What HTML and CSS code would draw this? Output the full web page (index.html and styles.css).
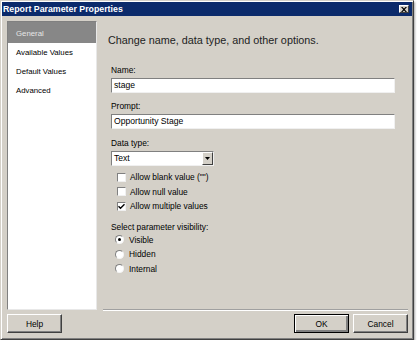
FILE: index.html
```html
<!DOCTYPE html>
<html lang="en">
<head>
    <meta charset="UTF-8">
    <title>Report Parameter Properties</title>
    <link rel="stylesheet" href="styles.css">
</head>
<body>

    <div class="dialog">

        <!-- Title bar -->
        <div class="titlebar">
            <span class="title">Report Parameter Properties</span>
            <span class="close">
                <svg width="6" height="5" viewBox="0 0 6 5"><path d="M0 0h1.5l1.5 1.6 1.5-1.6h1.5l-2.2 2.5 2.2 2.5h-1.5l-1.5-1.6-1.5 1.6h-1.5l2.2-2.5z" fill="#000"/></svg>
            </span>
        </div>

        <div class="content">

            <!-- Page list -->
            <ul class="nav">
                <li class="nav-item active">General</li>
                <li class="nav-item">Available Values</li>
                <li class="nav-item">Default Values</li>
                <li class="nav-item">Advanced</li>
            </ul>

            <!-- General page -->
            <div class="page">
                <h2 class="page-title">Change name, data type, and other options.</h2>
                <div class="form">
                    <div class="field">
                        <label>Name:</label>
                        <div class="textbox">stage</div>
                    </div>
                    <div class="field">
                        <label>Prompt:</label>
                        <div class="textbox">Opportunity Stage</div>
                    </div>
                    <div class="field field-type">
                        <label>Data type:</label>
                        <div class="select">
                            <span class="select-value">Text</span>
                            <span class="select-btn"><svg width="5" height="3" viewBox="0 0 5 3"><path d="M0 0h5l-2.5 3z" fill="#000"/></svg></span>
                        </div>
                    </div>

                    <div class="options">
                        <div class="option"><span class="checkbox"></span>Allow blank value ("")</div>
                        <div class="option"><span class="checkbox"></span>Allow null value</div>
                        <div class="option"><span class="checkbox checked"><svg width="7" height="7" viewBox="0 0 7 7"><path d="M0.5 3.2l2 2 4-4" fill="none" stroke="#000" stroke-width="1.4"/></svg></span>Allow multiple values</div>
                    </div>

                    <div class="group-label">Select parameter visibility:</div>
                    <div class="options radios">
                        <div class="option"><span class="radio checked"></span>Visible</div>
                        <div class="option"><span class="radio"></span>Hidden</div>
                        <div class="option"><span class="radio"></span>Internal</div>
                    </div>
                </div>
            </div>

        </div>

        <!-- Buttons -->
        <div class="footer">
            <button class="btn">Help</button>
            <span class="spacer"></span>
            <button class="btn default">OK</button>
            <button class="btn">Cancel</button>
        </div>

    </div>

</body>
</html>
```

FILE: styles.css
```css
body { margin: 0; background-color: #fff; font-family: "Liberation Sans", Arial, sans-serif; font-size: 8.4px; color: #000; }
.dialog { width: 414px; height: 340px; box-sizing: border-box; display: flex; flex-direction: column; background-color: #d4d0c8; border: 1px solid; border-color: #d4d0c8 #404040 #404040 #d4d0c8; box-shadow: inset 1px 1px #fff, inset -1px -1px #808080, 1px 2px 2px rgba(0,0,0,0.35); }

.titlebar { display: flex; align-items: center; justify-content: space-between; height: 14px; margin: 1px 1px 0 1px; padding: 0 3px 0 1px; background-color: #0b2a6b; color: #fff; }
.title { font-weight: bold; font-size: 8.8px; }
.close { display: flex; align-items: center; justify-content: center; width: 10px; height: 8px; box-sizing: border-box; background-color: #d4d0c8; border: 1px solid; border-color: #fff #404040 #404040 #fff; }

.content { display: flex; padding: 5px 5px 0 6px; }
.nav { list-style: none; margin: 0; padding: 0; width: 90px; height: 289px; box-sizing: border-box; background-color: #fff; border: 1px solid; border-color: #808080 #e8e8e8 #e8e8e8 #808080; font-size: 7.8px; }
.nav-item { height: 19px; line-height: 19px; padding-left: 8px; }
.nav-item.active { height: 21px; line-height: 23px; background-color: #878787; color: #e6e6e6; }

.page { flex: 1; margin-left: 6px; height: 288px; padding-left: 5px; border-bottom: 1px solid #a0a0a0; box-shadow: 0 1px #fff; }
.page-title { margin: 13px 0 0 0; font-size: 10.8px; font-weight: normal; line-height: 13px; color: #222; }
.form { padding-left: 3px; margin-top: 18px; }

.field label { display: block; line-height: 11px; margin-bottom: 2px; }
.field + .field { margin-top: 8px; }
.field-type { margin-top: 9px !important; }
.textbox { width: 284px; height: 15px; box-sizing: border-box; padding-left: 2px; line-height: 13px; font-size: 8.6px; background-color: #fff; border: 1px solid; border-color: #808080 #f0f0f0 #f0f0f0 #808080; }

.select { display: flex; width: 103px; height: 15px; box-sizing: border-box; background-color: #fff; border: 1px solid; border-color: #808080 #f0f0f0 #f0f0f0 #808080; }
.select-value { flex: 1; padding-left: 2px; line-height: 13px; font-size: 8.6px; }
.select-btn { display: flex; align-items: center; justify-content: center; width: 11px; background-color: #d4d0c8; border: 1px solid; border-color: #fff #404040 #404040 #fff; box-sizing: border-box; }

.options { margin-top: 4px; padding-left: 6px; }
.option { display: flex; align-items: center; height: 14.5px; }
.checkbox { display: flex; align-items: center; justify-content: center; width: 9px; height: 9px; box-sizing: border-box; margin-right: 4px; background-color: #fff; border: 1px solid; border-color: #808080 #f0f0f0 #f0f0f0 #808080; }

.group-label { margin-top: 8px; line-height: 11px; }
.radios { margin-top: 0; padding-left: 4px; }
.radio { position: relative; width: 9px; height: 9px; box-sizing: border-box; margin-right: 5px; border-radius: 50%; background-color: #fff; border: 1px solid; border-color: #808080 #f4f4f4 #f4f4f4 #808080; }
.radio.checked::after { content: ""; position: absolute; left: 2px; top: 2px; width: 3px; height: 3px; border-radius: 50%; background-color: #000; }

.footer { display: flex; gap: 4px; padding: 4px 5px 0 6px; }
.spacer { flex: 1; }
.btn { width: 55px; height: 19px; padding: 0; font-family: inherit; font-size: 8.4px; color: #000; background-color: #d4d0c8; border: 1px solid; border-color: #fff #404040 #404040 #fff; box-shadow: inset -1px -1px #808080; }
.btn.default { border-color: #000; box-shadow: inset 1px 1px #fff, inset -2px -2px #808080; }
```
